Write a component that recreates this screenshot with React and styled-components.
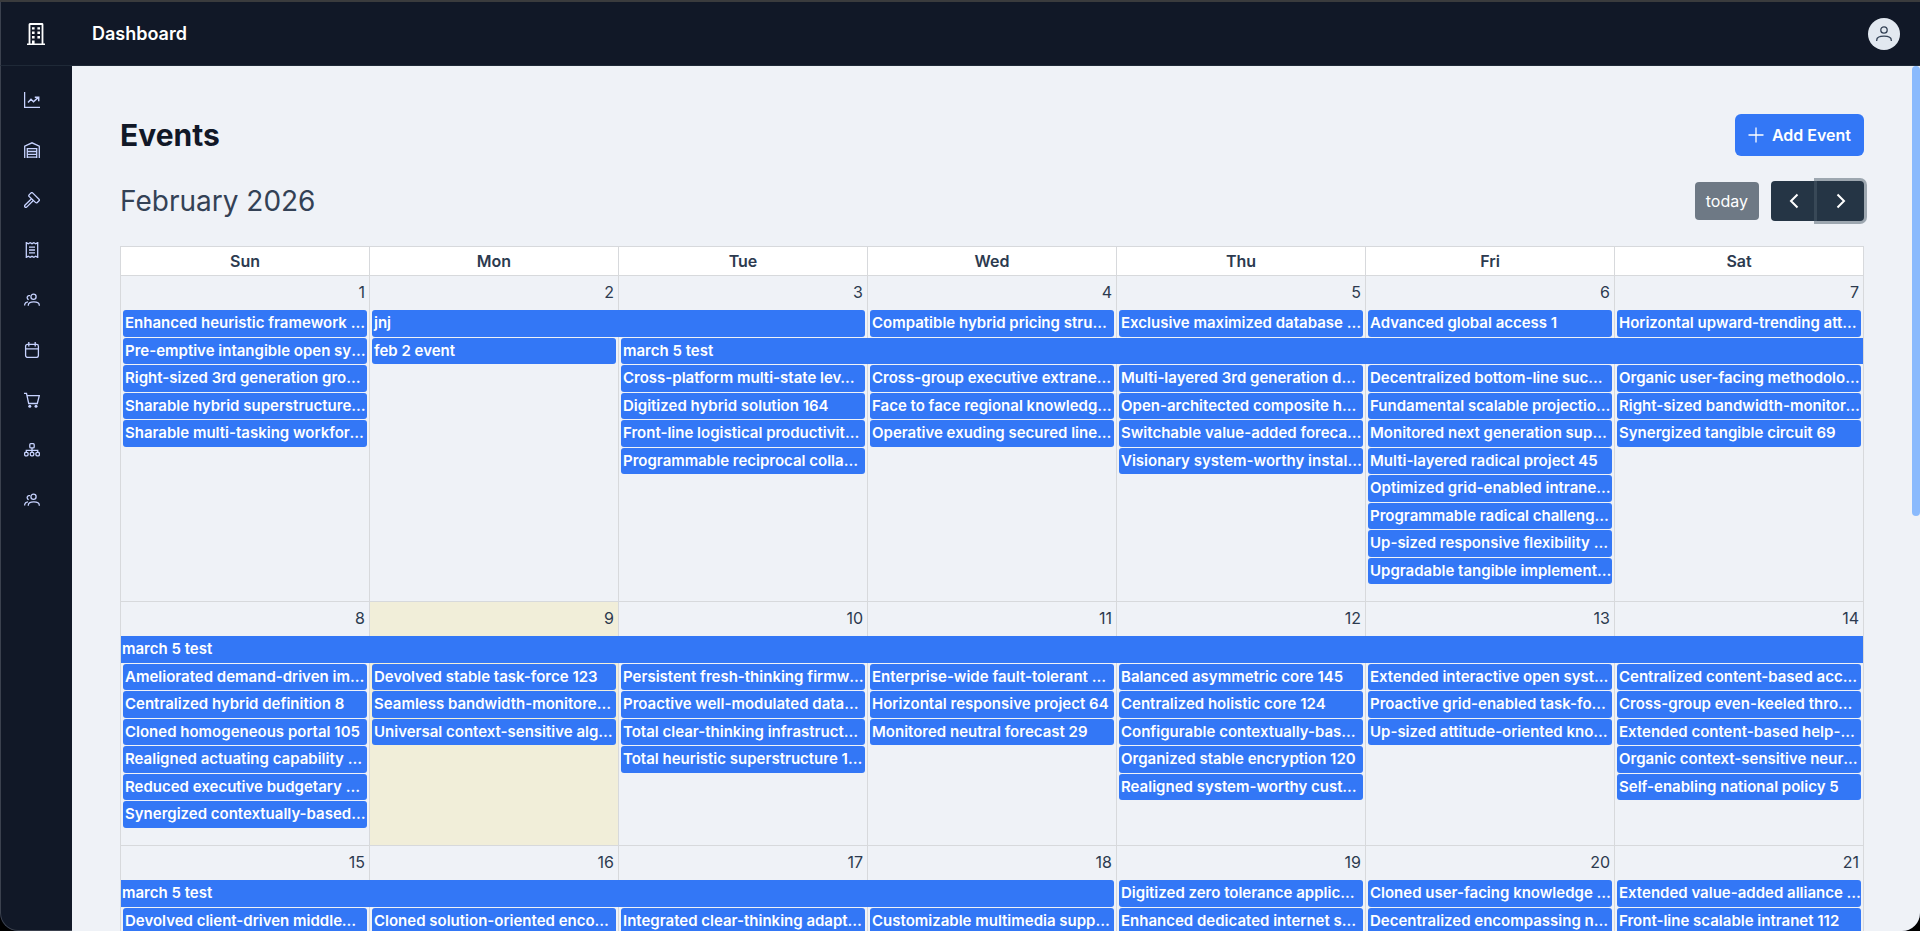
import React, { Component } from 'react';
import styled, { createGlobalStyle } from 'styled-components';

const GlobalStyle = createGlobalStyle`
  *, *::before, *::after {
    box-sizing: border-box;
  }

  body {
    margin: 0;
    background: #000;
    color: #2c3a4f;
    font-family: Inter, 'Liberation Sans', sans-serif;
    font-size: 16px;
    line-height: 24px;
  }
`;

const Shell = styled.div`
  display: flex;
  flex-direction: column;
  height: 100vh;
  overflow: hidden;
  border-top: 2px solid #3a3b3d;
  border-radius: 0 0 18px 18px;
  background: #111827;
`;

const TopBar = styled.header`
  display: flex;
  flex: none;
  align-items: center;
  height: 64px;
  padding-right: 20px;
  border-left: 1px solid #3b414e;
  border-bottom: 1px solid #1f2937;
`;

const Logo = styled.a`
  display: flex;
  justify-content: center;
  width: 70px;
  color: #fff;
`;

const AppTitle = styled.h1`
  flex: 1;
  margin: 0 21px;
  color: #fff;
  font-size: 18px;
  font-weight: 600;
  line-height: 28px;
`;

const Avatar = styled.button`
  display: flex;
  align-items: center;
  justify-content: center;
  width: 32px;
  height: 32px;
  padding: 0;
  border: 0;
  border-radius: 50%;
  background: #e2e8f0;
  color: #334155;
`;

const Body = styled.div`
  display: flex;
  flex: 1;
  min-height: 0;
`;

const SideNav = styled.nav`
  display: flex;
  flex: none;
  flex-direction: column;
  width: 72px;
  padding-top: 9px;
  border-left: 1px solid #3b414e;
  border-bottom: 1px solid #3b414e;
  border-bottom-left-radius: 18px;
`;

const NavLink = styled.a`
  display: flex;
  align-items: center;
  height: 50px;
  padding-left: 23px;
  color: #c7d2fe;
`;

const Main = styled.main`
  flex: 1;
  min-width: 0;
  padding: 48px;
  overflow: hidden;
  background: #eff2f7;
`;

const ScrollTrack = styled.div`
  flex: none;
  width: 8px;
  background: #eff2f7;
`;

const ScrollThumb = styled.div`
  height: 52%;
  border-radius: 4px;
  background: #8abafd;
`;

const PageHead = styled.div`
  display: flex;
  align-items: center;
  justify-content: space-between;
  margin-bottom: 24px;
`;

const PageTitle = styled.h2`
  margin: 0;
  color: #111827;
  font-size: 30px;
  font-weight: 700;
  line-height: 36px;
`;

const AddButton = styled.button`
  display: flex;
  align-items: center;
  gap: 8px;
  height: 42px;
  padding: 0 13px;
  border: 0;
  border-radius: 6px;
  background: #3377f6;
  color: #fff;
  font: inherit;
  font-weight: 600;
`;

const Toolbar = styled.div`
  display: flex;
  align-items: center;
  justify-content: space-between;
  margin-bottom: 24px;
`;

const MonthTitle = styled.h3`
  margin: 0;
  color: #334155;
  font-size: 28px;
  font-weight: 400;
  line-height: 42px;
`;

const ToolbarGroup = styled.div`
  display: flex;
  align-items: center;
`;

const TodayButton = styled.button`
  height: 38px;
  margin-right: 12px;
  padding: 0 11px;
  border: 0;
  border-radius: 4px;
  background: #6e7985;
  color: #fff;
  font: inherit;
`;

const ArrowButton = styled.button`
  display: flex;
  align-items: center;
  justify-content: center;
  width: ${(props) => (props.$active ? 47 : 46)}px;
  height: 40px;
  padding: 0;
  border: 0;
  border-radius: ${(props) => (props.$active ? '0 4px 4px 0' : '4px 0 0 4px')};
  background: #253545;
  box-shadow: ${(props) => (props.$active ? '0 0 0 3px rgba(76, 91, 106, 0.5)' : 'none')};
  color: #fff;
`;

const Calendar = styled.table`
  width: 100%;
  border-collapse: collapse;
  table-layout: fixed;
`;

const DayHead = styled.th`
  height: 29px;
  padding: 0;
  border: 1px solid #d7d9dc;
  background: #fff;
  font-weight: 600;
`;

const DayCell = styled.td`
  padding: 0 0 16px;
  border: 1px solid #d7d9dc;
  background: ${(props) => (props.$today ? '#f1eed9' : 'transparent')};
  vertical-align: top;
`;

const DayNumber = styled.a`
  display: block;
  height: 34px;
  padding: 4px 4px 0;
  color: inherit;
  text-align: right;
  text-decoration: none;
`;

const Slots = styled.ul`
  margin: 0;
  padding: 0;
  list-style: none;
`;

const Slot = styled.li`
  height: 28px;
  padding-bottom: 1px;

  &:nth-child(even) {
    height: 27px;
  }
`;

/* An event reaches over the cells after it, with one border per cell. */
const EventLink = styled.a`
  display: block;
  position: relative;
  z-index: 1;
  height: 100%;
  margin-left: ${(props) => (props.$fromBefore ? 0 : 2)}px;
  margin-right: calc(
    (100% + 1px) * -${(props) => props.$span - 1} + ${(props) => (props.$goesOn ? 0 : 2)}px
  );
  padding: 1px 0 0 ${(props) => (props.$fromBefore ? 1 : 2)}px;
  overflow: hidden;
  border-radius: ${(props) => (props.$fromBefore ? 0 : 3)}px ${(props) => (props.$goesOn ? 0 : 3)}px
    ${(props) => (props.$goesOn ? 0 : 3)}px ${(props) => (props.$fromBefore ? 0 : 3)}px;
  background: #3377f6;
  color: #fff;
  font-size: 15px;
  font-weight: 600;
  text-decoration: none;
  text-overflow: ellipsis;
  white-space: nowrap;
`;

const BuildingIcon = () => (
  <svg width="18" height="22" viewBox="0 0 18 22" fill="none" stroke="currentColor">
    <path d="M2.5 21V1.5Q2.5 1 3 1H15Q15.5 1 15.5 1.5V21" strokeWidth="1.8" />
    <path d="M0 21.2H18" strokeWidth="1.5" />
    <path
      d="M5 4.2h2.6v2.4H5zM10.4 4.2H13v2.4h-2.6zM5 8.6h2.6V11H5zM10.4 8.6H13V11h-2.6zM5 13h2.6v2.4H5zM10.4 13H13v2.4h-2.6zM5 17.4h2.6V21H5z"
      fill="currentColor"
      stroke="none"
    />
  </svg>
);

const UserIcon = () => (
  <svg width="16" height="16" viewBox="0 0 16 16" fill="none" stroke="currentColor" strokeWidth="1.3">
    <circle cx="8" cy="4" r="3.2" />
    <path d="M.7 15v-.8C.7 11.6 3 10.2 8 10.2s7.3 1.4 7.3 4v.8" />
  </svg>
);

const icons = {
  chart: (
    <>
      <path d="M.6 0V15.4H16" />
      <path d="M4 10.4 7 7.3 9.5 9.7 14 5.6M10.8 5.3h3.9v3.9" strokeWidth="1.5" />
    </>
  ),
  warehouse: (
    <>
      <path d="M.7 16V4.2L8 .8l7.3 3.4V16" />
      <path d="M3.3 16V6.7h9.4V16M3.3 9.5h9.4M3.3 12.3h9.4M3.3 15.2h9.4" />
    </>
  ),
  gavel: (
    <>
      <path d="M5.1 2.9 7 .9q.8-.7 1.6 0l6.4 6.3q.8.8 0 1.6l-1.7 1.7q-.8.7-1.6.1L5.2 4.5q-.8-.8-.1-1.6z" />
      <path d="M7.5 6.7.9 13.2q-.7 1 .1 1.8t1.7.1l6.6-6.6" />
    </>
  ),
  receipt: (
    <>
      <path d="M2.3.6 4.3 1.7 6.1.7 8 1.7 9.9.7l1.8 1 2-1.1v14.8l-2-1.1-1.8 1-1.9-1-1.9 1-1.8-1-2 1.1z" />
      <path d="M5 5.2h6M5 8h6M5 10.8h6" />
    </>
  ),
  people: (
    <>
      <circle cx="9.5" cy="4.8" r="2.6" />
      <path d="M4.3 13.8v-.6c0-2.2 2-3.3 5.5-3.3s5.5 1.1 5.5 3.3v.6" />
      <path d="M6 3.7C3.5 3 2.6 5.4 3.6 6.8q.4.6 1.1.8M.6 13.5c0-2 1-3.4 3.4-3.7" />
    </>
  ),
  calendar: (
    <>
      <rect x="1.6" y="2.4" width="12.8" height="13" rx="1.8" />
      <path d="M1.6 6.8h12.8M4.8 0v4.5M11.2 0v4.5" />
    </>
  ),
  cart: (
    <>
      <path d="M0 1.3h2.5L4.7 11.5H13.3L15.3 3.7H3.1" />
      <circle cx="5.8" cy="14.2" r="1.5" fill="currentColor" stroke="none" />
      <circle cx="12" cy="14.2" r="1.5" fill="currentColor" stroke="none" />
    </>
  ),
  tree: (
    <>
      <rect x="5.8" y="1.7" width="4.4" height="4.2" rx="1" />
      <path d="M8 6v4M2.3 10V8.4h11.4V10" />
      <rect x=".6" y="10.3" width="3.5" height="3.5" rx="1.2" />
      <rect x="6.3" y="10.3" width="3.5" height="3.5" rx="1.2" />
      <rect x="11.9" y="10.3" width="3.5" height="3.5" rx="1.2" />
    </>
  ),
};

const NavIcon = ({ name }) => (
  <svg width="16" height="16" viewBox="0 0 16 16" fill="none" stroke="currentColor" strokeWidth="1.3">
    {icons[name]}
  </svg>
);

const PlusIcon = () => (
  <svg width="16" height="16" viewBox="0 0 16 16" stroke="currentColor" strokeWidth="1.3">
    <path d="M8 .5v15M.5 8h15" />
  </svg>
);

const Chevron = ({ next }) => (
  <svg width="10" height="16" viewBox="0 0 10 16" fill="none" stroke="currentColor" strokeWidth="2">
    <path d={next ? 'M1.5 1.5 8 8l-6.5 6.5' : 'M8.5 1.5 2 8l6.5 6.5'} />
  </svg>
);

const navItems = [
  ['Reports', 'chart'],
  ['Warehouses', 'warehouse'],
  ['Jobs', 'gavel'],
  ['Invoices', 'receipt'],
  ['Customers', 'people'],
  ['Events', 'calendar'],
  ['Orders', 'cart'],
  ['Departments', 'tree'],
  ['Users', 'people'],
];

const dayNames = ['Sun', 'Mon', 'Tue', 'Wed', 'Thu', 'Fri', 'Sat'];

// null keeps a slot free for an event that started on an earlier day
const weeks = [
  [
    [
      'Enhanced heuristic framework 127',
      'Pre-emptive intangible open system 4',
      'Right-sized 3rd generation groupware 7',
      'Sharable hybrid superstructure 131',
      'Sharable multi-tasking workforce 9',
    ],
    [{ title: 'jnj', span: 2 }, 'feb 2 event'],
    [
      null,
      { title: 'march 5 test', span: 5, goesOn: true },
      'Cross-platform multi-state lev…',
      'Digitized hybrid solution 164',
      'Front-line logistical productivity 2',
      'Programmable reciprocal collaboration 6',
    ],
    [
      'Compatible hybrid pricing structure 3',
      null,
      'Cross-group executive extranet 14',
      'Face to face regional knowledge base 5',
      'Operative exuding secured line 111',
    ],
    [
      'Exclusive maximized database 118',
      null,
      'Multi-layered 3rd generation data 6',
      'Open-architected composite hub 2',
      'Switchable value-added forecast 21',
      'Visionary system-worthy installation 4',
    ],
    [
      'Advanced global access 1',
      null,
      'Decentralized bottom-line suc…',
      'Fundamental scalable projection 13',
      'Monitored next generation support 7',
      'Multi-layered radical project 45',
      'Optimized grid-enabled intranet 8',
      'Programmable radical challenge 16',
      'Up-sized responsive flexibility 103',
      'Upgradable tangible implementation 3',
    ],
    [
      'Horizontal upward-trending att…',
      null,
      'Organic user-facing methodology 22',
      'Right-sized bandwidth-monitored 17',
      'Synergized tangible circuit 69',
    ],
  ],
  [
    [
      { title: 'march 5 test', span: 7, fromBefore: true, goesOn: true },
      'Ameliorated demand-driven implementation 2',
      'Centralized hybrid definition 8',
      'Cloned homogeneous portal 105',
      'Realigned actuating capability 144',
      'Reduced executive budgetary management 19',
      'Synergized contextually-based adapter 6',
    ],
    [
      null,
      'Devolved stable task-force 123',
      'Seamless bandwidth-monitored 12',
      'Universal context-sensitive algorithm 5',
    ],
    [
      null,
      'Persistent fresh-thinking firmware 4',
      'Proactive well-modulated database 9',
      'Total clear-thinking infrastructure 3',
      'Total heuristic superstructure 1…',
    ],
    [
      null,
      'Enterprise-wide fault-tolerant archive 13',
      'Horizontal responsive project 64',
      'Monitored neutral forecast 29',
    ],
    [
      null,
      'Balanced asymmetric core 145',
      'Centralized holistic core 124',
      'Configurable contextually-based 8',
      'Organized stable encryption 120',
      'Realigned system-worthy customer 2',
    ],
    [
      null,
      'Extended interactive open system 16',
      'Proactive grid-enabled task-fo…',
      'Up-sized attitude-oriented knowledge 4',
    ],
    [
      null,
      'Centralized content-based access 3',
      'Cross-group even-keeled throughput 15',
      'Extended content-based help-desk 6',
      'Organic context-sensitive neural 11',
      'Self-enabling national policy 5',
    ],
  ],
  [
    [
      { title: 'march 5 test', span: 4, fromBefore: true },
      'Devolved client-driven middleware 5',
    ],
    [null, 'Cloned solution-oriented encoding 8'],
    [null, 'Integrated clear-thinking adapter 3'],
    [null, 'Customizable multimedia support 12'],
    ['Digitized zero tolerance application 4', 'Enhanced dedicated internet solution 9'],
    ['Cloned user-facing knowledge user 17', 'Decentralized encompassing network 6'],
    ['Extended value-added alliance 120', 'Front-line scalable intranet 112'],
  ],
];

const CalendarEvent = ({ event }) => {
  const item = typeof event === 'string' ? { title: event } : event;
  return (
    <EventLink href="#event" $span={item.span || 1} $fromBefore={item.fromBefore} $goesOn={item.goesOn}>
      {item.title}
    </EventLink>
  );
};

class App extends Component {
  constructor() {
    super();
    this.state = {
      today: 9,
    };
  }

  render() {
    return (
      <Shell>
        <GlobalStyle />
        <TopBar>
          <Logo href="#home" aria-label="Home">
            <BuildingIcon />
          </Logo>
          <AppTitle>Dashboard</AppTitle>
          <Avatar type="button" aria-label="Account">
            <UserIcon />
          </Avatar>
        </TopBar>
        <Body>
          <SideNav>
            {navItems.map(([label, icon]) => (
              <NavLink key={label} href="#nav" aria-label={label}>
                <NavIcon name={icon} />
              </NavLink>
            ))}
          </SideNav>
          <Main>
            <PageHead>
              <PageTitle>Events</PageTitle>
              <AddButton type="button">
                <PlusIcon />
                Add Event
              </AddButton>
            </PageHead>
            <Toolbar>
              <MonthTitle>February 2026</MonthTitle>
              <ToolbarGroup>
                <TodayButton type="button">today</TodayButton>
                <ArrowButton type="button" aria-label="Previous month">
                  <Chevron />
                </ArrowButton>
                <ArrowButton type="button" aria-label="Next month" $active>
                  <Chevron next />
                </ArrowButton>
              </ToolbarGroup>
            </Toolbar>
            <Calendar>
              <thead>
                <tr>
                  {dayNames.map((name) => (
                    <DayHead key={name}>{name}</DayHead>
                  ))}
                </tr>
              </thead>
              <tbody>
                {weeks.map((days, week) => (
                  <tr key={week}>
                    {days.map((events, index) => {
                      const day = week * 7 + index + 1;
                      return (
                        <DayCell key={day} $today={day === this.state.today}>
                          <DayNumber href="#day">{day}</DayNumber>
                          <Slots>
                            {events.map((event, slot) => (
                              <Slot key={slot}>{event && <CalendarEvent event={event} />}</Slot>
                            ))}
                          </Slots>
                        </DayCell>
                      );
                    })}
                  </tr>
                ))}
              </tbody>
            </Calendar>
          </Main>
          <ScrollTrack>
            <ScrollThumb />
          </ScrollTrack>
        </Body>
      </Shell>
    );
  }
}

export default App;
